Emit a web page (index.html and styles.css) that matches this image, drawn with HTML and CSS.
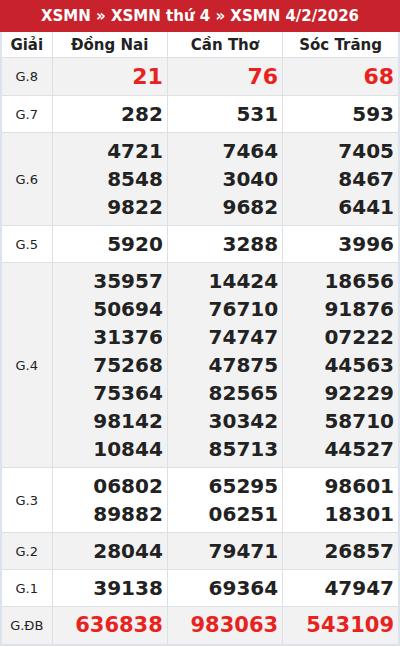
FILE: index.html
```html
<!DOCTYPE html>
<html lang="vi">
<head>
<meta charset="utf-8">
<link rel="stylesheet" href="styles.css">
</head>
<body>
<div class="box">
  <h2 class="title">XSMN » XSMN thứ 4 » XSMN 4/2/2026</h2>
  <table class="kq">
    <colgroup><col class="c-lbl"><col class="c-n"><col class="c-n"><col class="c-n"></colgroup>
    <thead>
      <tr><th>Giải</th><th>Đồng Nai</th><th>Cần Thơ</th><th>Sóc Trăng</th></tr>
    </thead>
    <tbody>
      <tr class="alt"><td class="lbl">G.8</td><td class="num red big">21</td><td class="num red big">76</td><td class="num red big">68</td></tr>
      <tr><td class="lbl">G.7</td><td class="num">282</td><td class="num">531</td><td class="num">593</td></tr>
      <tr class="alt"><td class="lbl">G.6</td><td class="num">4721<br>8548<br>9822</td><td class="num">7464<br>3040<br>9682</td><td class="num">7405<br>8467<br>6441</td></tr>
      <tr><td class="lbl">G.5</td><td class="num">5920</td><td class="num">3288</td><td class="num">3996</td></tr>
      <tr class="alt"><td class="lbl">G.4</td><td class="num">35957<br>50694<br>31376<br>75268<br>75364<br>98142<br>10844</td><td class="num">14424<br>76710<br>74747<br>47875<br>82565<br>30342<br>85713</td><td class="num">18656<br>91876<br>07222<br>44563<br>92229<br>58710<br>44527</td></tr>
      <tr><td class="lbl">G.3</td><td class="num">06802<br>89882</td><td class="num">65295<br>06251</td><td class="num">98601<br>18301</td></tr>
      <tr class="alt"><td class="lbl">G.2</td><td class="num">28044</td><td class="num">79471</td><td class="num">26857</td></tr>
      <tr><td class="lbl">G.1</td><td class="num">39138</td><td class="num">69364</td><td class="num">47947</td></tr>
      <tr class="alt"><td class="lbl">G.ĐB</td><td class="num red db">636838</td><td class="num red db">983063</td><td class="num red db">543109</td></tr>
    </tbody>
  </table>
</div>
</body>
</html>
```
FILE: styles.css
```css
html, body {
  margin: 0;
  padding: 0;
  background: #fff;
}
body {
  font-family: "DejaVu Sans", sans-serif;
  color: #222;
}
.box {
  width: 400px;
  border: 2px solid #dde3ec;
  border-top: 0;
  box-sizing: border-box;
}
.title {
  margin: 0 -2px;
  background: #c8232c;
  color: #fff;
  font-size: 15px;
  font-weight: bold;
  text-align: center;
  height: 32px;
  line-height: 32px;
}
.kq {
  width: 100%;
  border-collapse: collapse;
  table-layout: fixed;
}
.c-lbl { width: 50px; }
.kq th {
  font-size: 15px;
  font-weight: bold;
  color: #222;
  height: 25px;
  padding: 0;
  border: 1px solid #dde0e4;
  border-top: 0;
  text-align: center;
  background: #fff;
}
.kq td {
  border: 1px solid #dde0e4;
  padding: 4px 4px 4px 0;
}
.kq tr > :first-child { border-left: 0; }
.kq tr > :last-child { border-right: 0; }
.kq tbody tr:last-child td { border-bottom: 0; }
.alt td { background: #f2f2f3; }
.lbl {
  text-align: center;
  font-size: 13px;
  color: #222;
  padding-right: 0 !important;
}
.num {
  text-align: right;
  font-size: 20px;
  font-weight: bold;
  line-height: 28px;
  color: #222;
}
.red { color: #e8231e; }
.big { font-size: 22px; line-height: 29px; }
.db { font-size: 21px; line-height: 29px; }
```
